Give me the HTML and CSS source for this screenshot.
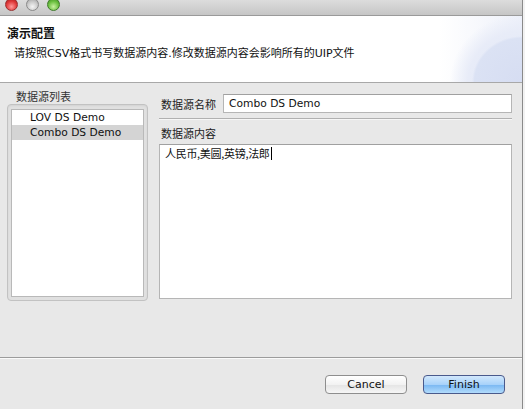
FILE: index.html
```html
<!DOCTYPE html>
<html>
<head>
<meta charset="utf-8">
<link rel="stylesheet" href="styles.css">
</head>
<body>
<div class="window">
  <div class="titlebar">
    <span class="light red"></span>
    <span class="light gray"></span>
    <span class="light green"></span>
  </div>
  <div class="header">
    <div class="h-title">演示配置</div>
    <div class="h-desc">请按照CSV格式书写数据源内容.修改数据源内容会影响所有的UIP文件</div>
  </div>
  <div class="content">
    <div class="left">
      <div class="group-label">数据源列表</div>
      <div class="group">
        <ul class="list">
          <li class="item">LOV DS Demo</li>
          <li class="item selected">Combo DS Demo</li>
        </ul>
      </div>
    </div>
    <div class="right">
      <div class="name-row">
        <span class="label">数据源名称</span>
        <div class="input">Combo DS Demo</div>
      </div>
      <div class="sep"></div>
      <div class="label content-label">数据源内容</div>
      <div class="textarea">人民币,美圆,英镑,法郎<span class="caret"></span></div>
    </div>
  </div>
  <div class="footer">
    <button class="btn cancel">Cancel</button>
    <button class="btn finish">Finish</button>
  </div>
</div>
</body>
</html>
```
FILE: styles.css
```css
html, body {
  margin: 0;
  padding: 0;
  background: #f2f2f2;
}
body {
  font-family: "DejaVu Sans", "Noto Sans CJK SC", sans-serif;
  font-size: 11px;
  color: #111;
}
.window {
  width: 522px;
  height: 409px;
  border-right: 1px solid #8a8a8a;
  background: #e8e8e8;
  display: flex;
  flex-direction: column;
  overflow: hidden;
}
.titlebar {
  height: 16px;
  box-sizing: border-box;
  border-bottom: 1px solid #9a9a9a;
  background: linear-gradient(#dcdcdc, #c6c6c6);
  display: flex;
  gap: 8px;
  padding-left: 5px;
  align-items: flex-start;
}
.light {
  width: 13px;
  height: 13px;
  border-radius: 50%;
  margin-top: -2px;
  box-sizing: border-box;
}
.red {
  background: radial-gradient(circle at 50% 70%, #ff9a9a, #e03a3a 55%, #a01818);
  border: 1px solid #9a3030;
}
.gray {
  background: radial-gradient(circle at 50% 70%, #f4f4f4, #c8c8c8 55%, #9a9a9a);
  border: 1px solid #8a8a8a;
}
.green {
  background: radial-gradient(circle at 50% 70%, #c8f0a0, #6cc040 55%, #3a8a20);
  border: 1px solid #3e7a2a;
}
.header {
  height: 67px;
  box-sizing: border-box;
  border-bottom: 1px solid #a8a8a8;
  background:
    radial-gradient(ellipse 50px 46px at 100% 100%, #d6ddf2, #dbe2f4 95%, rgba(255,255,255,0) 100%),
    radial-gradient(ellipse 72px 68px at 100% 100%, #e0e6f6, #e8ecf8 75%, rgba(255,255,255,0) 100%),
    linear-gradient(90deg, #ffffff 84%, #eef1fa 100%);
  padding: 9px 0 0 7px;
}
.h-title {
  font-weight: bold;
  font-size: 12px;
  line-height: 16px;
  font-family: "Noto Sans CJK SC", sans-serif;
}
.h-desc {
  margin-top: 5px;
  margin-left: 7px;
  line-height: 16px;
  font-family: "DejaVu Sans", "Noto Sans CJK SC", sans-serif;
}
.content {
  height: 274px;
  box-sizing: border-box;
  display: grid;
  grid-template-columns: 141px 353px;
  column-gap: 11px;
  padding: 6px 0 0 7px;
}
.left {
  display: flex;
  flex-direction: column;
}
.group-label {
  height: 15px;
  line-height: 15px;
  margin-left: 9px;
  color: #333;
  font-family: "Noto Sans CJK SC", sans-serif;
}
.group {
  height: 197px;
  box-sizing: border-box;
  border: 1px solid #c2c2c2;
  border-radius: 4px;
  background: #e0e0e0;
  padding: 4px 3px 3px 3px;
  box-shadow: inset 0 1px 2px rgba(0,0,0,0.06);
}
.list {
  list-style: none;
  margin: 0;
  padding: 0;
  height: 100%;
  box-sizing: border-box;
  border: 1px solid #b9b9b9;
  background: #fff;
}
.item {
  height: 15px;
  line-height: 15px;
  padding-left: 18px;
  font-size: 10.7px;
}
.selected {
  background: #d4d4d4;
}
.right {
  display: flex;
  flex-direction: column;
}
.name-row {
  display: flex;
  align-items: center;
  height: 19px;
  margin-top: 5px;
}
.label {
  font-family: "Noto Sans CJK SC", sans-serif;
  color: #222;
  padding-left: 2px;
}
.name-row .label {
  width: 62px;
  flex: none;
}
.input {
  flex: 1;
  height: 19px;
  box-sizing: border-box;
  border: 1px solid #b5b5b5;
  border-top-color: #a0a0a0;
  background: #fff;
  line-height: 17px;
  padding-left: 5px;
  font-size: 10.7px;
}
.sep {
  margin-top: 5px;
  height: 1px;
  background: #b0b0b0;
  border-bottom: 1px solid #f6f6f6;
}
.content-label {
  margin-top: 6px;
  height: 18px;
  line-height: 15px;
}
.textarea {
  height: 155px;
  box-sizing: border-box;
  border: 1px solid #b5b5b5;
  border-top-color: #a0a0a0;
  background: #fff;
  padding: 1px 0 0 5px;
  line-height: 15px;
  font-family: "Noto Sans CJK SC", sans-serif;
  letter-spacing: -0.3px;
}
.caret {
  display: inline-block;
  width: 1px;
  height: 13px;
  background: #000;
  vertical-align: -2px;
  margin-left: 1px;
}
.footer {
  flex: 1;
  border-top: 1px solid #9c9c9c;
  box-shadow: inset 0 1px 0 #fafafa;
  display: flex;
  justify-content: flex-end;
  align-items: flex-start;
  gap: 16px;
  padding: 17px 17px 0 0;
}
.btn {
  width: 82px;
  height: 19px;
  box-sizing: border-box;
  border-radius: 4px;
  font-family: "DejaVu Sans", sans-serif;
  font-size: 11px;
  line-height: 15px;
  padding: 0;
  color: #111;
}
.cancel {
  border: 1px solid #8e8e8e;
  background: linear-gradient(#ffffff, #f2f2f2 50%, #e4e4e4 51%, #f6f6f6);
}
.finish {
  border: 1px solid #4a5a8c;
  background: linear-gradient(#d2e8fc, #a8d2fa 50%, #78b6f2 51%, #b2dcfc);
}
```
